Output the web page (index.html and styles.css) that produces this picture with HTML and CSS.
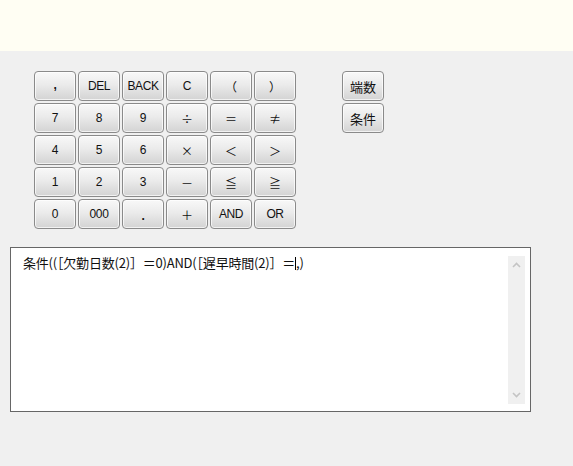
FILE: index.html
```html
<!DOCTYPE html>
<html lang="ja">
<head>
<meta charset="utf-8">
<link rel="stylesheet" href="styles.css">
</head>
<body>
<div class="header"></div>
<div class="main">
  <div class="pads">
    <div class="keypad">
      <div class="key comma">,</div><div class="key">DEL</div><div class="key">BACK</div><div class="key">C</div><div class="key sym">（</div><div class="key sym">）</div>
      <div class="key">7</div><div class="key">8</div><div class="key">9</div><div class="key sym">÷</div><div class="key sym">＝</div><div class="key sym">≠</div>
      <div class="key">4</div><div class="key">5</div><div class="key">6</div><div class="key sym">×</div><div class="key sym">＜</div><div class="key sym">＞</div>
      <div class="key">1</div><div class="key">2</div><div class="key">3</div><div class="key sym">－</div><div class="key sym">≦</div><div class="key sym">≧</div>
      <div class="key">0</div><div class="key">000</div><div class="key dot">.</div><div class="key sym">＋</div><div class="key">AND</div><div class="key">OR</div>
    </div>
    <div class="side">
      <div class="key cjk">端数</div>
      <div class="key cjk">条件</div>
    </div>
  </div>
  <div class="editor">
    <div class="text">条件((［欠勤日数(2)］＝0)AND(［遅早時間(2)］＝<span class="caret"></span>,)</div>
    <div class="scroll">
      <svg width="17" height="12" viewBox="0 0 17 12"><path d="M5 8 L8.5 4.5 L12 8" fill="none" stroke="#c4c4c4" stroke-width="1.6"/></svg>
      <svg width="17" height="12" viewBox="0 0 17 12"><path d="M5 4 L8.5 7.5 L12 4" fill="none" stroke="#c4c4c4" stroke-width="1.6"/></svg>
    </div>
  </div>
</div>
</body>
</html>
```
FILE: styles.css
```css
html, body {
  margin: 0;
  padding: 0;
}
body {
  background: #f0f0f0;
  width: 573px;
  height: 466px;
  overflow: hidden;
  font-family: "Liberation Sans", "Noto Sans CJK JP", sans-serif;
}
.header {
  height: 51px;
  background: #fffef3;
}
.main {
  padding: 20px 0 0 10px;
}
.pads {
  display: flex;
  gap: 46px;
  padding-left: 24px;
}
.keypad {
  display: grid;
  grid-template-columns: repeat(6, 42px);
  grid-auto-rows: 30px;
  gap: 2px;
}
.side {
  display: flex;
  flex-direction: column;
  gap: 2px;
}
.side .key {
  width: 42px;
  height: 30px;
}
.key {
  box-sizing: border-box;
  border: 1px solid #8a8a8a;
  border-radius: 4px;
  background: linear-gradient(to bottom, #f8f8f8 0%, #ebebeb 45%, #d3d3d3 100%);
  box-shadow: inset 0 0 0 1px rgba(255,255,255,0.7);
  display: flex;
  align-items: center;
  justify-content: center;
  font-size: 12px;
  color: #111;
  letter-spacing: -0.4px;
}
.key.sym {
  font-family: "Noto Sans CJK JP", sans-serif;
  font-size: 12px;
  font-weight: 400;
  color: #111;
  letter-spacing: 0;
}
.key.comma {
  font-weight: 700;
  font-size: 12px;
  padding-bottom: 3px;
}
.key.dot {
  font-weight: 700;
  font-size: 12px;
  padding-top: 4px;
}
.key.cjk {
  font-family: "Noto Sans CJK JP", sans-serif;
  font-size: 13px;
  letter-spacing: 0;
}
.editor {
  margin-top: 18px;
  width: 521px;
  height: 165px;
  box-sizing: border-box;
  border: 1px solid #666;
  background: #fff;
  display: flex;
  padding: 7px 5px 7px 12px;
}
.text {
  flex: 1;
  font-family: "Noto Sans CJK JP", sans-serif;
  font-size: 13px;
  line-height: 16px;
  color: #111;
  letter-spacing: -0.2px;
}
.caret {
  display: inline-block;
  width: 1px;
  height: 13px;
  background: #000;
  vertical-align: -2px;
}
.scroll {
  width: 17px;
  margin-top: 1px;
  background: #f0f0f0;
  display: flex;
  flex-direction: column;
  justify-content: space-between;
  padding: 3px 0;
}
.scroll svg {
  display: block;
}
```
